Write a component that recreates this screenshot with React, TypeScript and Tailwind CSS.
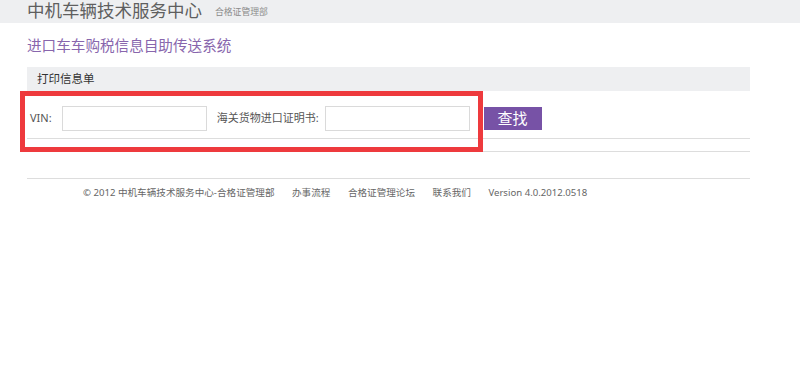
import React from "react";

const font = { fontFamily: '"Noto Sans", "Noto Sans CJK SC", sans-serif' };

export default function App() {
  return (
    <div className="relative w-full h-[383px] bg-white" style={font}>
      <div className="h-[23px] bg-[#eeeff1] flex items-start pl-[27px]">
        <span className="text-[17.5px] leading-[18px] text-[#5f5f5f] mt-[1px]">中机车辆技术服务中心</span>
        <span className="text-[8.8px] leading-[10px] text-[#8a8a8a] ml-[13px] mt-[7px]">合格证管理部</span>
      </div>
      <div className="pl-[27px] pt-[13px] text-[14.6px] leading-[18px] text-[#8866ad]">进口车车购税信息自助传送系统</div>
      <div className="ml-[27px] w-[723px] mt-[13px]">
        <div className="h-[24px] bg-[#eeeff1] flex items-center pl-[10px] text-[11.5px] text-[#333]">打印信息单</div>
        <div className="pt-[15px] pb-[7px] border-b border-[#dddddd] flex items-center pl-[3px] text-[11px] text-[#555]">
          <span>VIN:</span>
          <div className="ml-[10px] w-[145px] h-[25px] border border-[#dadada] bg-white" />
          <span className="ml-[10px]">海关货物进口证明书:</span>
          <div className="ml-[6px] w-[145px] h-[25px] border border-[#dadada] bg-white" />
          <button className="ml-[14px] w-[58px] h-[23px] bg-[#7752a6] text-white text-[15px] leading-[23px]">查找</button>
        </div>
        <div className="h-[13px] border-b border-[#dddddd]" />
        <div className="h-[27px] border-b border-[#dddddd]" />
        <div className="pl-[56px] pt-[7px] flex gap-[17.5px] text-[9.6px] leading-[14px] text-[#666]">
          <span>© 2012 中机车辆技术服务中心-合格证管理部</span>
          <span>办事流程</span>
          <span>合格证管理论坛</span>
          <span>联系我们</span>
          <span>Version 4.0.2012.0518</span>
        </div>
      </div>
      <div className="absolute left-[20px] top-[91px] w-[463px] h-[61px] border-[5px] border-[#ee3a3d]" />
    </div>
  );
}
